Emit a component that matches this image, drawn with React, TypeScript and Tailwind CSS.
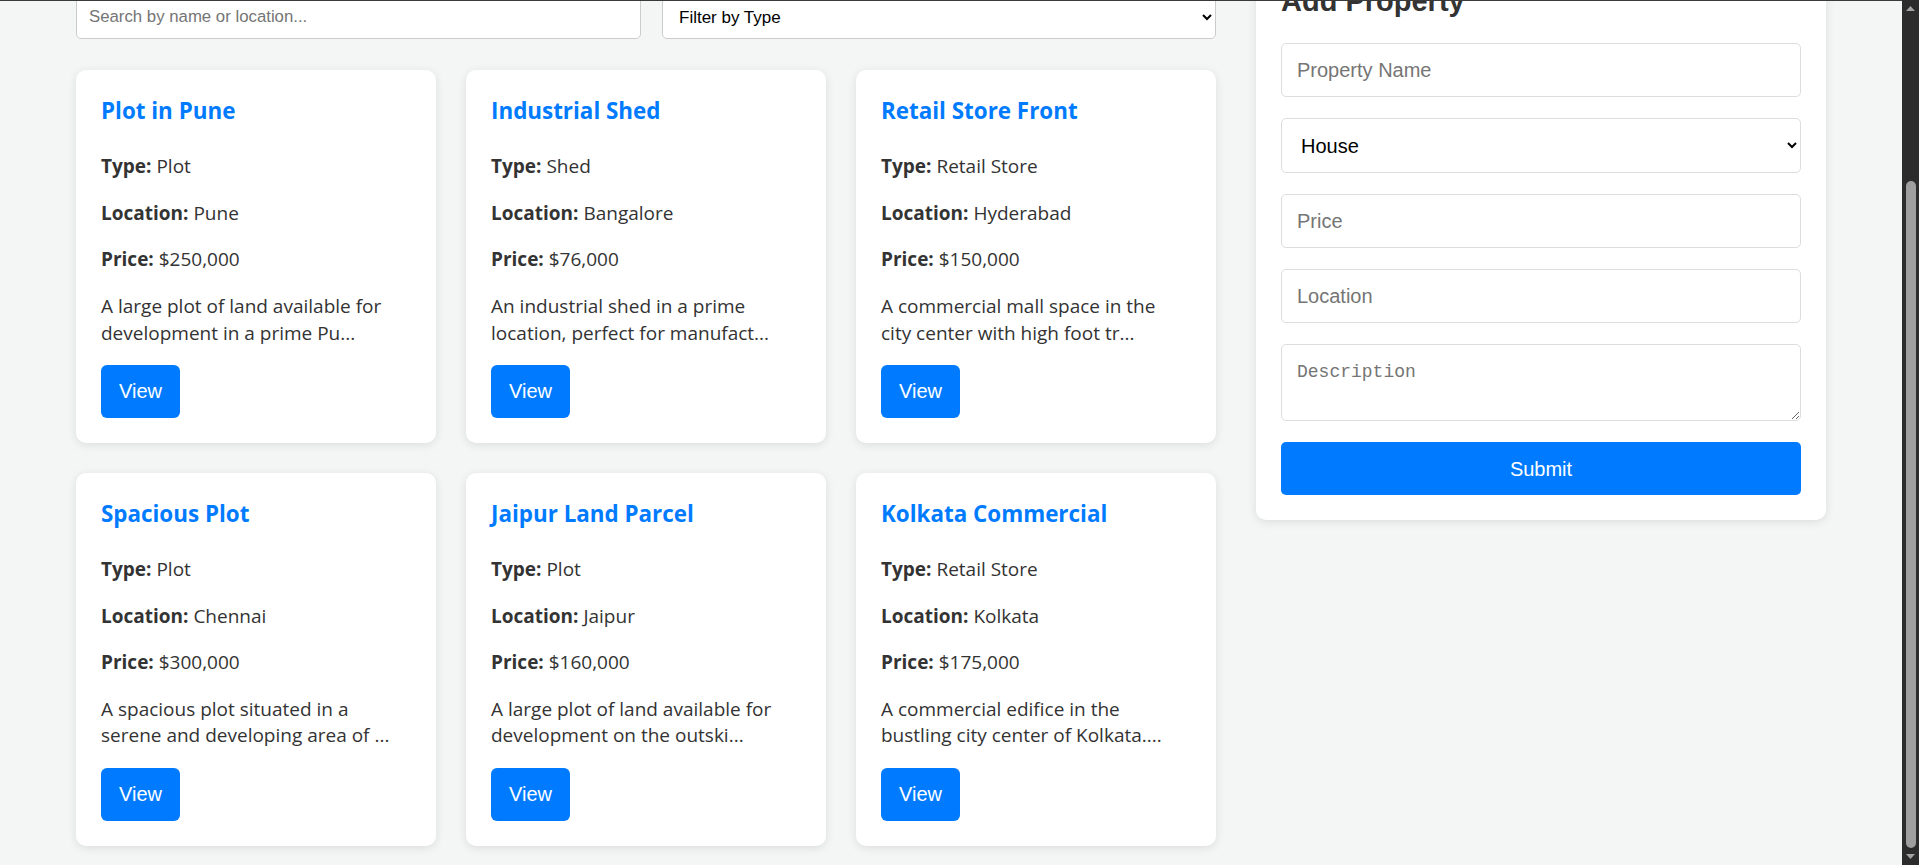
import React from "react";

interface Property {
  name: string;
  type: string;
  location: string;
  price: string;
  description: string;
}

const properties: Property[] = [
  {
    name: "Plot in Pune",
    type: "Plot",
    location: "Pune",
    price: "$250,000",
    description: "A large plot of land available for development in a prime Pune locality.",
  },
  {
    name: "Industrial Shed",
    type: "Shed",
    location: "Bangalore",
    price: "$76,000",
    description: "An industrial shed in a prime location, perfect for manufacturing units.",
  },
  {
    name: "Retail Store Front",
    type: "Retail Store",
    location: "Hyderabad",
    price: "$150,000",
    description: "A commercial mall space in the city center with high foot traffic.",
  },
  {
    name: "Spacious Plot",
    type: "Plot",
    location: "Chennai",
    price: "$300,000",
    description: "A spacious plot situated in a serene and developing area of Chennai.",
  },
  {
    name: "Jaipur Land Parcel",
    type: "Plot",
    location: "Jaipur",
    price: "$160,000",
    description: "A large plot of land available for development on the outskirts of Jaipur.",
  },
  {
    name: "Kolkata Commercial",
    type: "Retail Store",
    location: "Kolkata",
    price: "$175,000",
    description: "A commercial edifice in the bustling city center of Kolkata. Great access.",
  },
];

// cut the description the same way the listing does
const shorten = (text: string) => text.substring(0, 60) + "...";

function PropertyCard({ property }: { property: Property }) {
  return (
    <div className="bg-white rounded-[10px] shadow-[0_2px_10px_rgba(0,0,0,0.1)] py-[25px] pl-[25px] pr-[32px] flex flex-col font-['Open_Sans',sans-serif] text-[#333]">
      <h3 className="text-[22.4px] leading-[32px] font-bold text-[#007bff] mb-[26px]">
        {property.name}
      </h3>
      <div className="flex flex-col gap-[20.3px] text-[19px] leading-[26.4px]">
        <p>
          <strong>Type:</strong> {property.type}
        </p>
        <p>
          <strong>Location:</strong> {property.location}
        </p>
        <p>
          <strong>Price:</strong> {property.price}
        </p>
        <p>{shorten(property.description)}</p>
      </div>
      <div className="mt-[19px]">
        <button className="h-[53px] px-[18px] bg-[#007bff] text-white rounded-[6px] text-[20px] font-['Liberation_Sans',Arial,sans-serif]">
          View
        </button>
      </div>
    </div>
  );
}

function Scrollbar() {
  return (
    <div className="w-[17px] h-full bg-[#2c2c2c] flex flex-col items-center shrink-0">
      <div className="h-[17px] flex items-center justify-center">
        <svg width="9" height="5" viewBox="0 0 9 5">
          <path d="M0 5 L4.5 0 L9 5 Z" fill="#a3a3a3" />
        </svg>
      </div>
      <div className="flex-1 w-full flex justify-center">
        <div className="mt-[164px] w-[10px] h-[667px] rounded-full bg-[#9f9f9f]" />
      </div>
      <div className="h-[17px] flex items-center justify-center">
        <svg width="9" height="5" viewBox="0 0 9 5">
          <path d="M0 0 L4.5 5 L9 0 Z" fill="#a3a3a3" />
        </svg>
      </div>
    </div>
  );
}

export default function App() {
  return (
    <div className="h-[865px] flex bg-[#f4f5f5] overflow-hidden font-['Liberation_Sans',Arial,sans-serif]">
      <div className="flex-1 min-w-0 flex flex-col">
        <div className="h-px bg-[#3a3a3a] shrink-0" />
        <div className="flex-1 overflow-hidden">
          <div className="mx-[76px] -mt-[42px] flex items-start gap-[40px]">
            <section className="w-[1140px] shrink-0 pt-[36px]">
              <div className="flex gap-[21px] mb-[31px]">
                <input
                  type="text"
                  placeholder="Search by name or location..."
                  className="w-[565px] h-[44px] px-[12px] text-[16.8px] bg-white border border-[#ccc] rounded-[5px] placeholder:text-[#757575] outline-none"
                />
                <select className="flex-1 h-[44px] px-[12px] text-[17px] bg-white border border-[#ccc] rounded-[5px] text-black outline-none">
                  <option>Filter by Type</option>
                  <option>House</option>
                  <option>Plot</option>
                  <option>Shed</option>
                  <option>Retail Store</option>
                </select>
              </div>
              <div className="grid grid-cols-3 gap-[30px]">
                {properties.map((p) => (
                  <PropertyCard key={p.name} property={p} />
                ))}
              </div>
            </section>

            <aside className="flex-1 min-w-0 bg-white rounded-[10px] shadow-[0_2px_10px_rgba(0,0,0,0.1)] p-[25px]">
              <h2 className="text-[29px] leading-[34px] font-bold text-[#333] mb-[25px]">
                Add Property
              </h2>
              <form className="flex flex-col gap-[21px]" onSubmit={(e) => e.preventDefault()}>
                <input
                  type="text"
                  placeholder="Property Name"
                  className="h-[54px] px-[15px] text-[20px] border border-[#ddd] rounded-[5px] placeholder:text-[#757575] outline-none"
                />
                <select className="h-[55px] px-[15px] text-[20px] bg-white border border-[#ddd] rounded-[5px] text-black outline-none">
                  <option>House</option>
                  <option>Plot</option>
                  <option>Shed</option>
                  <option>Retail Store</option>
                </select>
                <input
                  type="text"
                  placeholder="Price"
                  className="h-[54px] px-[15px] text-[20px] border border-[#ddd] rounded-[5px] placeholder:text-[#757575] outline-none"
                />
                <input
                  type="text"
                  placeholder="Location"
                  className="h-[54px] px-[15px] text-[20px] border border-[#ddd] rounded-[5px] placeholder:text-[#757575] outline-none"
                />
                <textarea
                  placeholder="Description"
                  className="h-[77px] px-[15px] py-[14px] text-[18px] font-['Liberation_Mono',monospace] border border-[#ddd] rounded-[5px] placeholder:text-[#757575] outline-none"
                />
                <button className="h-[53px] bg-[#007bff] text-white text-[20px] rounded-[5px]">
                  Submit
                </button>
              </form>
            </aside>
          </div>
        </div>
      </div>
      <Scrollbar />
    </div>
  );
}
